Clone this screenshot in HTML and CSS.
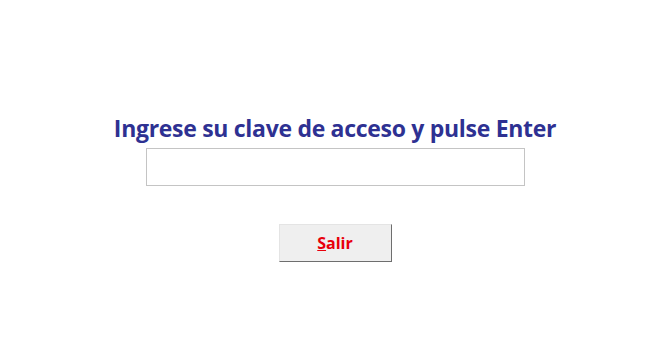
FILE: index.html
```html
<!DOCTYPE html>
<html lang="es">
<head>
    <meta charset="UTF-8">
    <title>Acceso</title>
    <link rel="stylesheet" href="styles.css">
</head>
<body>
    <div class="login">
        <h1 class="login-title">Ingrese su clave de acceso y pulse Enter</h1>
        <input type="password" class="login-input" autofocus>
        <button type="button" class="exit-btn"><u>S</u>alir</button>
    </div>
</body>
</html>
```

FILE: styles.css
```css
body {
    margin: 0;
    background-color: #fff;
    font-family: "Open Sans", Arial, sans-serif;
}

.login {
    display: flex;
    flex-direction: column;
    align-items: center;
    padding-top: 111px;
}

.login-title {
    margin: 0;
    color: #2e3192;
    font-size: 23px;
    font-weight: bold;
    line-height: 35px;
    letter-spacing: -0.3px;
}

.login-input {
    box-sizing: border-box;
    width: 379px;
    height: 38px;
    margin-top: 2px;
    border: 1px solid #c4c4c4;
    outline: none;
}

.exit-btn {
    box-sizing: border-box;
    width: 113px;
    height: 38px;
    margin-top: 38px;
    padding: 0;
    background: #efefef;
    border: 1px solid;
    border-color: #e4e4e4 #6e6e6e #6e6e6e #e4e4e4;
    color: #e8000b;
    font-family: "Open Sans", Arial, sans-serif;
    font-size: 16px;
    font-weight: bold;
}
```
